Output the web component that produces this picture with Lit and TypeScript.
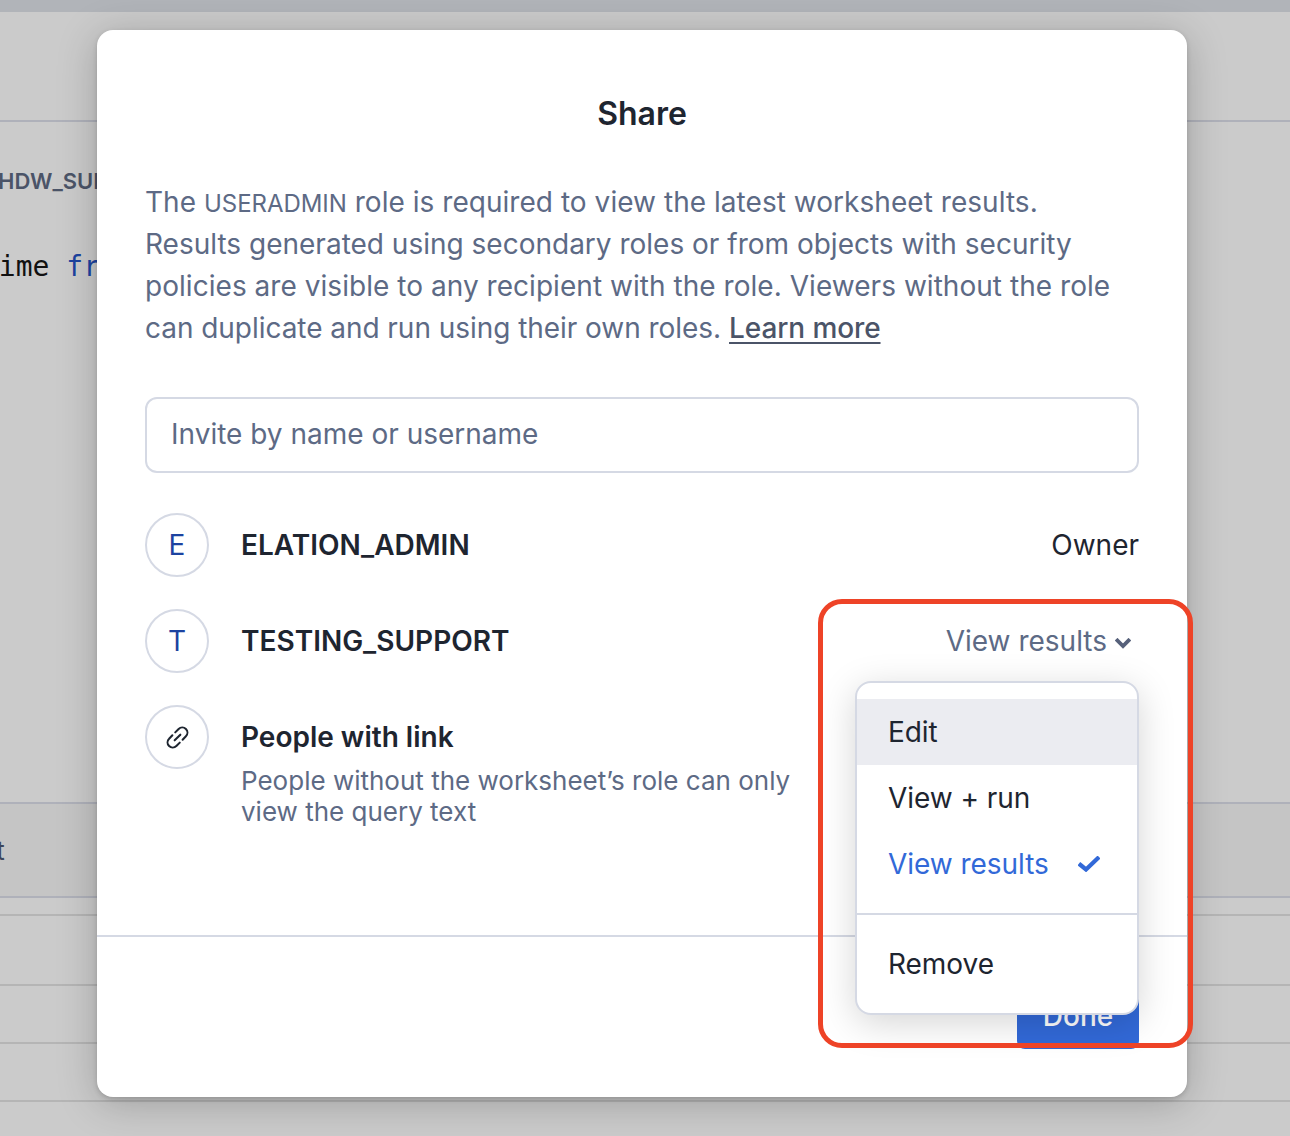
import { LitElement, html, css } from "lit";
import { customElement } from "lit/decorators.js";

@customElement("app-root")
export class AppRoot extends LitElement {
  static styles = css`
    :host { display: block; width: 1290px; height: 1136px; position: relative; overflow: hidden; background: #cbcbcb; font-family: Inter, "Liberation Sans", sans-serif; -webkit-font-smoothing: antialiased; }
    .page { display: flex; flex-direction: column; height: 1136px; }
    .topbar { height: 12px; background: #b1b4b9; flex: none; }
    .head { height: 108px; flex: none; border-bottom: 2px solid #afb1ba; box-sizing: content-box; }
    .sql { height: 680px; flex: none; box-sizing: border-box; padding-top: 47px; overflow: hidden; }
    .sql-role { font-size: 22px; font-weight: 600; color: #4b5468; line-height: 24px; white-space: nowrap; margin-left: -2px; }
    .sql-code { margin-top: 59px; font-family: "DejaVu Sans Mono", "Liberation Mono", monospace; font-size: 28px; line-height: 30px; color: #111; white-space: nowrap; margin-left: -18px; }
    .sql-code span { color: #1c43a0; }
    .tabs { height: 92px; flex: none; border-top: 2px solid #afb1ba; border-bottom: 2px solid #afb1ba; background: #c5c5c5; display: flex; align-items: center; font-size: 26px; color: #3d465a; }
    .tabs span { margin-left: -71px; }
    .row { flex: none; border-bottom: 2px solid #b5b5b5; box-sizing: border-box; }
    .r1 { height: 18px; } .r2 { height: 70px; } .r3 { height: 58px; } .r4 { height: 58px; }

    .modal { position: absolute; left: 97px; top: 30px; width: 1090px; height: 1067px; background: #fff; border-radius: 16px; box-shadow: 0 6px 40px rgba(0,0,0,.22), 0 2px 5px rgba(0,0,0,.16); display: flex; flex-direction: column; box-sizing: border-box; }
    .title { margin: 66px 0 0; text-align: center; font-size: 32px; line-height: 36px; font-weight: 600; color: #1e2530; }
    .body { padding: 0 48px; flex: 1; }
    .desc { margin: 49px 0 0; font-size: 28px; line-height: 42px; color: #5d6a85; letter-spacing: .04px; }
    .desc .caps { font-size: 24px; line-height: 1; letter-spacing: -.05px; }
    .desc .even { letter-spacing: 0; }
    .desc .tight { letter-spacing: -.045px; }
    .desc a { color: #4b5468; font-weight: 500; letter-spacing: -.1px; text-decoration: underline; text-underline-offset: 4px; }
    .input { margin-top: 48px; height: 76px; box-sizing: border-box; border: 2px solid #d5d9e4; border-radius: 12px; padding: 0 24px 2px; display: flex; align-items: center; font-size: 28px; color: #5d6a85; }
    .people { margin-top: 40px; display: flex; flex-direction: column; gap: 32px; }
    .person { display: flex; align-items: center; gap: 32px; min-height: 64px; font-size: 28px; }
    .person.top { align-items: flex-start; }
    .avatar { flex: none; width: 64px; height: 64px; border-radius: 50%; border: 2px solid #d5d9e4; box-sizing: border-box; display: flex; align-items: center; justify-content: center; color: #1c43a0; font-size: 28px; }
    .avatar svg { display: block; }
    .name { font-weight: 600; color: #1e2530; line-height: 34px; }
    .person.top .info { padding-top: 15px; }
    .note { margin-top: 11px; color: #5d6a85; font-size: 26px; line-height: 31px; }
    .spacer { flex: 1; }
    .owner { color: #1e2530; }
    .perm { color: #5d6a85; display: flex; align-items: center; gap: 8px; margin-right: 8px; }
    .perm svg { margin-top: 4px; }
    .foot { flex: none; height: 162px; border-top: 2px solid #d5d9e4; padding: 47px 48px 0; display: flex; justify-content: flex-end; box-sizing: border-box; }
    .done { width: 122px; height: 65px; border-radius: 8px; background: #3269d8; color: #fff; font-size: 28px; font-weight: 500; border: none; font-family: inherit; padding: 0 0 1px; }

    .menu { position: absolute; left: 855px; top: 681px; width: 284px; height: 334px; box-sizing: border-box; background: #fff; border: 2px solid #d5d9e4; border-radius: 16px; padding: 16px 0; box-shadow: 0 8px 36px rgba(0,0,0,.17); font-size: 28px; color: #1e2530; letter-spacing: -.05px; }
    .item { height: 66px; padding: 0 32px 0 31px; display: flex; align-items: center; justify-content: space-between; }
    .item.hover { background: #ebecf1; }
    .item.sel { color: #3269d8; padding-right: 37px; }
    .sep { height: 2px; background: #d5d9e4; margin: 16px 0 16px; }
    .mark { position: absolute; left: 818px; top: 599px; width: 375px; height: 449px; box-sizing: border-box; border: 5px solid #ee4327; border-radius: 24px; pointer-events: none; }
  `;

  render() {
    return html`
      <div class="page">
        <div class="topbar"></div>
        <div class="head"></div>
        <div class="sql">
          <div class="sql-role">HDW_SUPPORT</div>
          <div class="sql-code">time <span>from</span></div>
        </div>
        <div class="tabs"><span>Result</span></div>
        <div class="row r1"></div>
        <div class="row r2"></div>
        <div class="row r3"></div>
        <div class="row r4"></div>
      </div>
      <div class="modal">
        <div class="title">Share</div>
        <div class="body">
          <p class="desc">The <span class="caps">USERADMIN</span> role is required to view the latest worksheet results. <span class="even">Results generated using secondary roles or from objects with security</span> policies are visible to any recipient with the role. Viewers without the role <span class="tight">can duplicate and run using their own roles.</span> <a>Learn more</a></p>
          <div class="input">Invite by name or username</div>
          <div class="people">
            <div class="person">
              <div class="avatar">E</div>
              <div class="name">ELATION_ADMIN</div>
              <div class="spacer"></div>
              <div class="owner">Owner</div>
            </div>
            <div class="person">
              <div class="avatar">T</div>
              <div class="name">TESTING_SUPPORT</div>
              <div class="spacer"></div>
              <div class="perm">View results
                <svg width="16" height="11" viewBox="0 0 16 11"><path d="M2.500 2.500L8 8l5.500-5.500" fill="none" stroke="#56607a" stroke-width="3.800" stroke-linecap="square"/></svg>
              </div>
            </div>
            <div class="person top">
              <div class="avatar">
                <svg width="25" height="25" viewBox="0 0 22 22" fill="none" stroke="#1e2530" stroke-width="1.800" stroke-linecap="round" stroke-linejoin="round"><path d="M9 6.500L12 3.500a4.500 4.500 0 0 1 6.400 6.400L15.500 13"/><path d="M13 15.500L10 18.500a4.500 4.500 0 0 1-6.400-6.400L6.500 9"/><path d="M8.500 13.500l5-5"/></svg>
              </div>
              <div class="info">
                <div class="name">People with link</div>
                <div class="note">People without the worksheet’s role can only<br />view the query text</div>
              </div>
            </div>
          </div>
        </div>
        <div class="foot"><button class="done">Done</button></div>
      </div>
      <div class="menu">
        <div class="item hover">Edit</div>
        <div class="item">View + run</div>
        <div class="item sel">View results
          <svg width="22" height="16" viewBox="0 0 22 16"><path d="M2.500 9L8 13.500 19.500 2.500" fill="none" stroke="#3269d8" stroke-width="4.200" stroke-linecap="square"/></svg>
        </div>
        <div class="sep"></div>
        <div class="item">Remove</div>
      </div>
      <div class="mark"></div>
    `;
  }
}
